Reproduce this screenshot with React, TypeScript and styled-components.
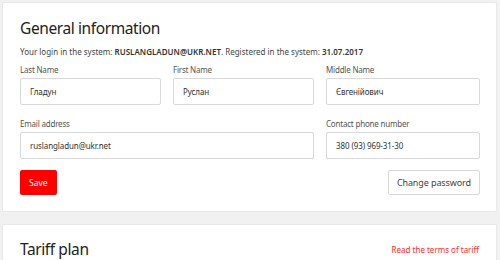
import React from "react";
import styled, { createGlobalStyle } from "styled-components";

const GlobalStyle = createGlobalStyle`
  html, body {
    margin: 0;
    padding: 0;
    background: #f1f1f1;
    font-family: "Noto Sans", "Open Sans", sans-serif;
    color: #333;
  }
`;

const Page = styled.div`
  display: flex;
  flex-direction: column;
  gap: 12px;
  padding: 2px 3px 0 2px;
  height: 258px;
  overflow: hidden;
`;

const Card = styled.section<{ $top?: number }>`
  background: #fff;
  border: 1px solid #e8e8e8;
  border-radius: 2px;
  padding: ${({ $top }) => $top ?? 13}px 17px 16px 17px;
  flex-shrink: 0;
`;

const TitleRow = styled.div`
  display: flex;
  align-items: center;
  justify-content: space-between;
`;

const Title = styled.h2`
  margin: 0;
  font-size: 15.5px;
  letter-spacing: -0.4px;
  font-weight: 400;
  color: #222;
  line-height: 24px;
`;

const Info = styled.p`
  margin: 6px 0 0;
  font-size: 8px;
  color: #444;
  line-height: 12px;

  b {
    font-weight: 600;
    color: #333;
  }
`;

const Grid = styled.div`
  display: grid;
  grid-template-columns: 141px 141px 154px;
  column-gap: 12px;
  row-gap: 13px;
  margin-top: 6px;
`;

const Field = styled.label<{ span?: number }>`
  display: flex;
  flex-direction: column;
  gap: 2px;
  grid-column: span ${({ span }) => span ?? 1};
`;

const Label = styled.span`
  font-size: 8px;
  letter-spacing: -0.2px;
  color: #555;
  line-height: 12px;
`;

const Input = styled.input`
  box-sizing: border-box;
  height: 27px;
  width: 100%;
  border: 1px solid #d9d9d9;
  border-radius: 2px;
  padding: 0 9px;
  font-family: inherit;
  font-size: 8px;
  letter-spacing: -0.1px;
  color: #333;
  background: #fff;
  outline: none;
`;

const Actions = styled.div`
  display: flex;
  justify-content: space-between;
  align-items: center;
  margin-top: 11px;
  width: 460px;
`;

const SaveButton = styled.button`
  height: 25px;
  padding: 0 9px;
  border: none;
  border-radius: 2px;
  background: #ff0000;
  color: #fff;
  font-family: inherit;
  font-size: 8.5px;
`;

const GhostButton = styled.button`
  height: 25px;
  padding: 0 8px;
  border: 1px solid #d9d9d9;
  border-radius: 2px;
  background: #fff;
  color: #444;
  font-family: inherit;
  font-size: 9px;
  letter-spacing: -0.1px;
`;

const Link = styled.a`
  font-size: 8px;
  color: #ff2a2a;
  text-decoration: none;
`;

export default function App() {
  return (
    <>
      <GlobalStyle />
      <Page>
        <Card>
          <Title>General information</Title>
          <Info>
            Your login in the system: <b>RUSLANGLADUN@UKR.NET</b>. Registered in the system:{" "}
            <b>31.07.2017</b>
          </Info>
          <Grid>
            <Field>
              <Label>Last Name</Label>
              <Input defaultValue="Гладун" />
            </Field>
            <Field>
              <Label>First Name</Label>
              <Input defaultValue="Руслан" />
            </Field>
            <Field>
              <Label>Middle Name</Label>
              <Input defaultValue="Євгенійович" />
            </Field>
            <Field span={2}>
              <Label>Email address</Label>
              <Input defaultValue="ruslangladun@ukr.net" />
            </Field>
            <Field>
              <Label>Contact phone number</Label>
              <Input defaultValue="380 (93) 969-31-30" />
            </Field>
          </Grid>
          <Actions>
            <SaveButton>Save</SaveButton>
            <GhostButton>Change password</GhostButton>
          </Actions>
        </Card>
        <Card $top={12}>
          <TitleRow>
            <Title>Tariff plan</Title>
            <Link href="#">Read the terms of tariff</Link>
          </TitleRow>
        </Card>
      </Page>
    </>
  );
}
